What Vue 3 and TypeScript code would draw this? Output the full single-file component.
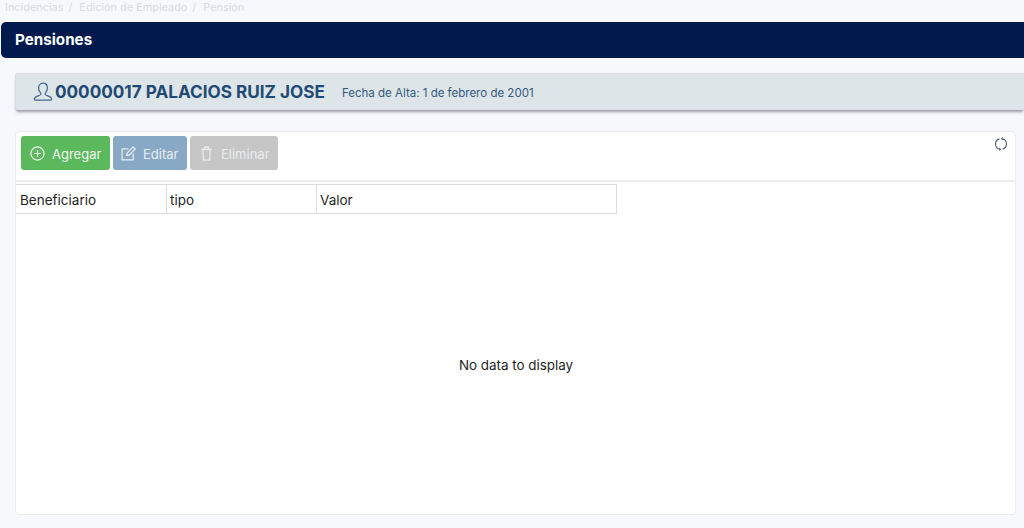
<script setup lang="ts">
const crumbs: string[] = ['Incidencias', 'Edición de Empleado', 'Pensión']
const columns: { name: string; width: number }[] = [
  { name: 'Beneficiario', width: 151 },
  { name: 'tipo', width: 150 },
  { name: 'Valor', width: 300 },
]
</script>

<template>
  <div class="page">
    <nav class="crumbs">
      <template v-for="(c, i) in crumbs" :key="c">
        <span>{{ c }}</span>
        <span v-if="i < crumbs.length - 1" class="sep">/</span>
      </template>
    </nav>
    <header class="title">Pensiones</header>
    <section class="employee">
      <svg class="user" width="20" height="20" viewBox="0 0 20 20" fill="none" stroke="#3f6a90" stroke-width="1.2">
        <path d="M10 1.2c-2.8 0-4.4 2.2-4.4 4.8 0 2 .8 3.7 1.9 4.8.4.5.4 1.6-.2 2.1-.9.7-5.3 1.7-5.9 3.6-.2.8.2 1.6 1.1 1.6h15c.9 0 1.3-.8 1.1-1.6-.6-1.9-5-2.9-5.9-3.6-.6-.5-.6-1.6-.2-2.1 1.1-1.1 1.9-2.8 1.9-4.8 0-2.6-1.6-4.8-4.4-4.8z" />
      </svg>
      <span class="name">00000017 PALACIOS RUIZ JOSE</span>
      <span class="date">Fecha de Alta: 1 de febrero de 2001</span>
    </section>
    <section class="panel">
      <div class="toolbar">
        <button class="btn add">
          <svg width="15" height="15" viewBox="0 0 16 16" fill="none" stroke="currentColor" stroke-width="1.3">
            <circle cx="8" cy="8" r="7" />
            <path d="M8 4.4v7.2M4.4 8h7.2" />
          </svg>
          <span>Agregar</span>
        </button>
        <button class="btn edit">
          <svg width="15" height="15" viewBox="0 0 16 16" fill="none" stroke="currentColor" stroke-width="1.3">
            <path d="M8 3H1.2v11.8H13V8" />
            <path d="M6 10.2l.5-2.7L12.9 1l2.2 2.2-6.4 6.5z" />
          </svg>
          <span>Editar</span>
        </button>
        <button class="btn del">
          <svg width="15" height="15" viewBox="0 0 16 16" fill="none" stroke="currentColor" stroke-width="1.3">
            <path d="M2.5 3.5h11M6 3.5V1.2h4v2.3M4 3.5l.7 11.5h6.6l.7-11.5" />
          </svg>
          <span>Eliminar</span>
        </button>
        <svg class="refresh" width="14" height="14" viewBox="0 0 14 14" fill="none" stroke="#4f5f72" stroke-width="1.1">
          <path d="M5.4 1.9A5.4 5.4 0 0 0 5.6 12.3" />
          <path d="M8.6 12.1A5.4 5.4 0 0 0 8.4 1.7" />
          <path d="M8.8 0v3.4L6.8 1.7zM5.2 14v-3.4l2 1.7z" fill="#4f5f72" stroke="none" />
        </svg>
      </div>
      <div class="columns">
        <div v-for="col in columns" :key="col.name" class="col" :style="{ width: col.width + 'px' }">{{ col.name }}</div>
      </div>
      <div class="empty">No data to display</div>
    </section>
  </div>
</template>

<style scoped>
.page {
  height: 528px;
  overflow: hidden;
  box-sizing: border-box;
  background: #f6f8fc;
  font-family: Inter, "Liberation Sans", sans-serif;
  color: #1d1f24;
  display: flex;
  flex-direction: column;
}
.crumbs {
  height: 22px;
  padding: 0 0 0 5px;
  box-sizing: border-box;
  display: flex;
  gap: 5px;
  font-size: 10.9px;
  line-height: 15px;
  color: #d9dbdf;
}
.crumbs .sep { margin-right: 2px; }
.crumbs .sep:last-of-type { margin-right: 4px; }
.title {
  height: 36px;
  margin-left: 1px;
  padding-left: 14px;
  border-radius: 5px 0 0 5px;
  background: #001a4e;
  color: #fff;
  font-size: 15.2px;
  font-weight: 700;
  line-height: 35px;
  flex: none;
}
.employee {
  margin: 15px 0 0 15px;
  height: 37px;
  flex: none;
  box-sizing: border-box;
  background: #dde5e8;
  border: 1px solid #d9dfe2;
  border-right: 0;
  border-radius: 3px 0 0 3px;
  box-shadow: 0 3px 3px -1px rgba(60, 70, 80, 0.5);
  padding-left: 17px;
  display: flex;
  align-items: center;
  color: #1f4a75;
}
.user { margin-right: 2px; flex: none; }
.name { font-size: 17.15px; font-weight: 700; }
.date { font-size: 11.5px; margin-left: 17px; padding-top: 2px; color: #34597f; }
.panel {
  margin: 21px 8px 13px 15px;
  flex: 1;
  box-sizing: border-box;
  background: #fff;
  border: 1px solid #ececec;
  border-radius: 4px;
  display: flex;
  flex-direction: column;
  min-height: 0;
}
.toolbar {
  height: 50px;
  flex: none;
  box-sizing: border-box;
  padding: 4px 5px 0;
  display: flex;
  align-items: flex-start;
  gap: 3px;
  border-bottom: 2px solid #ececec;
  position: relative;
}
.btn {
  height: 34px;
  border: 0;
  border-radius: 3px;
  color: #e9edf0;
  font-family: inherit;
  font-size: 13px;
  display: flex;
  align-items: center;
  padding: 0 9px;
  gap: 7px;
}
.btn span { position: relative; top: 1px; }
.btn svg { flex: none; }
.add { background: #5cb85c; width: 89px; color: #f0f7f0; }
.edit { background: #88a9c5; width: 74px; padding-left: 8px; }
.del { background: #c6c6c6; width: 88px; }
.refresh { position: absolute; right: 7px; top: 5px; }
.columns {
  display: flex;
  flex: none;
  margin-top: 2px;
}
.col {
  height: 30px;
  box-sizing: border-box;
  border-top: 1px solid #dcdcdc;
  border-bottom: 1px solid #dcdcdc;
  border-right: 1px solid #dcdcdc;
  padding-left: 3px;
  font-size: 13.5px;
  line-height: 30px;
}
.col:first-child { padding-left: 4px; }
.empty {
  flex: 1;
  display: flex;
  align-items: center;
  justify-content: center;
  font-size: 13.4px;
  padding: 1px 0 0 1px;
}
</style>

<style>
html, body { background: #f6f8fc; }
</style>
